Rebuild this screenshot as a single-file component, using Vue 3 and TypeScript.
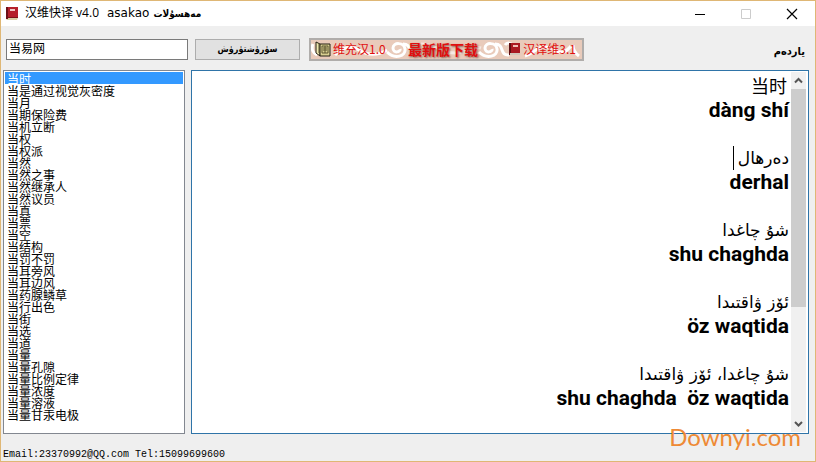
<script setup lang="ts">
import { ref } from 'vue'

interface Entry {
  text: string
  kind: 'han' | 'latin' | 'uyghur' | 'blank'
  caret?: boolean
}

const query = ref('当易网')
const selected = ref('当时')

const words: string[] = [
  '当时', '当是通过视觉灰密度', '当月', '当期保险费', '当机立断', '当权', '当权派', '当然',
  '当然之事', '当然继承人', '当然议员', '当真', '当票', '当空', '当结构', '当罚不罚',
  '当耳旁风', '当耳边风', '当药腺鳞草', '当行出色', '当街', '当选', '当道', '当量',
  '当量孔隙', '当量比例定律', '当量浓度', '当量溶液', '当量甘汞电极',
]

const entries: Entry[] = [
  { text: '当时', kind: 'han' },
  { text: 'dàng shí', kind: 'latin' },
  { text: '', kind: 'blank' },
  { text: 'دەرھال', kind: 'uyghur', caret: true },
  { text: 'derhal', kind: 'latin' },
  { text: '', kind: 'blank' },
  { text: 'شۇ چاغدا', kind: 'uyghur' },
  { text: 'shu chaghda', kind: 'latin' },
  { text: '', kind: 'blank' },
  { text: 'ئۆز ۋاقتىدا', kind: 'uyghur' },
  { text: 'öz waqtida', kind: 'latin' },
  { text: '', kind: 'blank' },
  { text: 'شۇ چاغدا، ئۆز ۋاقتىدا', kind: 'uyghur' },
  { text: 'shu chaghda  öz waqtida', kind: 'latin' },
]
</script>

<template>
  <div class="window">
    <header class="titlebar">
      <svg class="book" viewBox="0 0 14 15" aria-hidden="true">
        <path d="M1 1h12v11l-1 2H2l-1-1z" fill="#d8cfa4" />
        <path d="M2 1h11v11H2z" fill="#b5202a" />
        <path d="M1 1h2v12H1z" fill="#6b1016" />
        <path d="M3 11h10v1H3z" fill="#7d1218" />
        <path d="M5 3h5v2H5z" fill="#f0c8c4" />
      </svg>
      <h1 class="title">汉维快译 v4.0<span class="brand">asakao</span><bdi class="maker">مەھسۇلات</bdi></h1>
      <div class="controls">
        <button class="control" type="button" aria-label="Minimize">
          <svg viewBox="0 0 12 12"><path d="M1 6.500h10" stroke="#000" /></svg>
        </button>
        <button class="control" type="button" aria-label="Maximize" disabled>
          <svg viewBox="0 0 12 12"><path d="M1.500 1.500h9v9h-9z" fill="none" stroke="#ccc" /></svg>
        </button>
        <button class="control" type="button" aria-label="Close">
          <svg viewBox="0 0 12 12"><path d="M1 1l10 10M11 1L1 11" stroke="#000" stroke-width="1.200" /></svg>
        </button>
      </div>
    </header>

    <div class="toolbar">
      <input v-model="query" class="query" type="text" aria-label="查询" />
      <button class="search" type="button" lang="ug">سۈرۈشتۈرۈش</button>
      <div class="banner">
        <svg class="swirls" viewBox="0 0 271 19" preserveAspectRatio="none" aria-hidden="true">
          <g fill="none" stroke="#fff" stroke-width="3">
            <path d="M2 4c-2 5 0 9 4 11M24 15c8-8 16-10 24-5s18 6 28 0" />
            <path d="M76 12c8 8 19 4 18-3s-12-7-12-1 8 4 7 1M92 4c10 0 4 12 16 11" />
            <path d="M168 12c8 8 19 4 18-3s-12-7-12-1 8 4 7 1M184 4c10 0 4 12 14 11" />
            <path d="M110 4c16 0 20 10 36 9s16-8 24-5" opacity=".6" />
            <path d="M194 5c2-3 6-2 8 0M214 16c8-2 14-12 24-8s14 8 22-2M262 5c0 5 2 8 6 11" />
          </g>
        </svg>
        <a class="download" href="#v1">
          <svg class="pages" viewBox="0 0 16 16" aria-hidden="true">
            <path d="M1 1l4 2v12l-4-3z" fill="#eee8b0" stroke="#242014" />
            <path d="M5 3h10v12H5z" fill="#d9cf91" stroke="#242014" />
            <path d="M7 5h6v7H7zM8 7h4M8 9h4M10 5v7M4 2v10" fill="none" stroke="#5a5431" />
          </svg>维充汉1.0</a>
        <a class="newest" href="#latest">最新版下载</a>
        <a class="download" href="#v3">
          <svg class="mini" viewBox="0 0 13 14" aria-hidden="true">
            <path d="M1 1h11v12H1z" fill="#aa1922" />
            <path d="M1 1h2v12H1z" fill="#5e0d12" />
            <path d="M5 3h5v2H5z" fill="#efc0b8" />
            <path d="M2 11h10v2H2z" fill="#d1c7ba" />
          </svg>汉译维3.1</a>
      </div>
      <a class="help" href="#help" lang="ug">ياردەم</a>
    </div>

    <main class="panes">
      <select v-model="selected" class="words" :size="words.length" aria-label="词条">
        <option v-for="word in words" :key="word" :value="word" :class="{ current: word === selected }">{{ word }}</option>
      </select>
      <section class="result">
        <div class="entries" role="textbox" aria-multiline="true" aria-label="释义" contenteditable="true" spellcheck="false">
          <p v-for="(entry, i) in entries" :key="i" class="line" :class="entry.kind"><span v-if="entry.caret" class="caret"></span><bdi>{{ entry.text }}</bdi></p>
        </div>
        <div class="scrollbar" aria-hidden="true">
          <svg class="arrow" viewBox="0 0 15 17"><path d="M4 10.500l3.500-3.500 3.500 3.500" /></svg>
          <div class="track"><div class="thumb"></div></div>
          <svg class="arrow" viewBox="0 0 15 17"><path d="M4 7l3.500 3.500L11 7" /></svg>
        </div>
      </section>
    </main>

    <footer class="status">Email:23370992@QQ.com Tel:15099699600</footer>
    <div class="watermark">Downyi.com</div>
  </div>
</template>

<style>
body {
  margin: 0;
}
</style>

<style scoped>
* {
  box-sizing: border-box;
}

.window {
  position: relative;
  display: flex;
  flex-direction: column;
  min-height: 100vh;
  border: 1px solid #dfb775;
  background: #efefef;
  color: #000;
  font-family: "Liberation Sans", "Noto Sans CJK SC", "DejaVu Sans", sans-serif;
  font-size: 12px;
}

.titlebar {
  display: flex;
  align-items: center;
  height: 25px;
  padding-left: 4px;
  background: #fff;
}

.book {
  width: 14px;
  height: 15px;
  margin-right: 6px;
}

.title {
  flex: 1;
  margin: 0;
  font-family: "Open Sans", "Noto Sans CJK SC", "DejaVu Sans", sans-serif;
  font-size: 12px;
  font-weight: 400;
  line-height: 24px;
  white-space: nowrap;
}

.brand {
  margin: 0 4px 0 8px;
  font-family: "DejaVu Sans", sans-serif;
}

.maker {
  font-family: "DejaVu Sans Condensed", "DejaVu Sans", sans-serif;
  font-size: 10px;
  font-weight: 700;
}

.controls {
  display: flex;
}

.control {
  display: flex;
  align-items: center;
  justify-content: center;
  width: 46px;
  height: 24px;
  padding: 0;
  border: 0;
  background: none;
}

.control svg {
  width: 12px;
  height: 12px;
}

.toolbar {
  display: flex;
  align-items: center;
  height: 44px;
  padding: 2px 4px 0 5px;
}

.query {
  width: 182px;
  height: 21px;
  margin-right: 7px;
  padding: 0 2px 4px;
  border: 1px solid #7a7a7a;
  background: #fff;
  color: #000;
  font-family: "Noto Sans CJK SC", sans-serif;
  font-size: 12px;
  outline: 0;
}

.search {
  width: 105px;
  height: 21px;
  margin-right: 9px;
  padding: 0;
  border: 1px solid #adadad;
  background: #e1e1e1;
  color: #000;
  font-family: "DejaVu Sans Condensed", "DejaVu Sans", sans-serif;
  font-size: 9px;
  font-weight: 700;
  line-height: 18px;
}

.banner {
  position: relative;
  display: flex;
  align-items: center;
  justify-content: space-between;
  width: 275px;
  height: 23px;
  padding: 0 6px 0 4px;
  border: 2px solid #b0adab;
  background: #e9cbbb;
}

.swirls {
  position: absolute;
  inset: 0;
  width: 100%;
  height: 100%;
}

.download,
.newest {
  position: relative;
  display: flex;
  align-items: center;
  color: #e00f0f;
  font-family: "Noto Sans CJK SC", sans-serif;
  font-size: 12px;
  line-height: 18px;
  text-decoration: none;
}

.newest {
  margin-right: 8px;
  font-size: 14px;
  font-weight: 700;
  text-shadow: 1px 1px 2px #8a5a50;
}

.pages {
  width: 16px;
  height: 16px;
  margin-right: 2px;
}

.mini {
  width: 13px;
  height: 14px;
  margin-right: 2px;
}

.help {
  margin-left: auto;
  padding: 4px 6px 0 0;
  color: #000;
  font-family: "DejaVu Sans Condensed", "DejaVu Sans", sans-serif;
  font-size: 11px;
  font-weight: 700;
  text-decoration: none;
}

.panes {
  display: flex;
  flex: 1;
  gap: 6px;
  padding: 0 6px 0 2px;
}

.words {
  width: 182px;
  padding: 1px;
  border: 1px solid #828790;
  border-radius: 0;
  background: #fff;
  color: #000;
  font-family: "Noto Sans CJK SC", sans-serif;
  font-size: 12px;
  outline: 0;
  overflow: hidden;
}

.words option {
  display: flex;
  align-items: center;
  height: 12px;
  min-height: 12px;
  padding: 0 2px;
  overflow: visible;
}

.words .current {
  background: #3399ff linear-gradient(#3399ff, #3399ff);
  color: #fff;
  -webkit-text-fill-color: #fff;
}

.result {
  display: flex;
  flex: 1;
  border: 1px solid #2f74a8;
  background: #fff;
}

.entries {
  flex: 1;
  padding: 3px 2px 0 0;
  text-align: right;
  outline: 0;
}

.line {
  height: 24px;
  margin: 0;
  line-height: 24px;
  white-space: pre;
}

.han {
  padding-right: 2px;
  font-family: "Noto Sans CJK SC", sans-serif;
  font-size: 18px;
  line-height: 22px;
}

.latin {
  font-family: Roboto, "Liberation Sans", sans-serif;
  font-size: 21px;
  font-weight: 700;
}

.uyghur {
  font-family: "DejaVu Sans", sans-serif;
  font-size: 17px;
}

.caret {
  display: inline-block;
  width: 1px;
  height: 24px;
  margin-right: 4px;
  background: #000;
  vertical-align: top;
}

.scrollbar {
  display: flex;
  flex-direction: column;
  width: 15px;
  margin: 1px 2px 1px 0;
  background: #f0f0f0;
}

.arrow {
  width: 15px;
  height: 17px;
  fill: none;
  stroke: #555;
  stroke-width: 2;
}

.track {
  flex: 1;
}

.thumb {
  height: 67%;
  background: #cdcdcd;
}

.status {
  height: 27px;
  padding: 14px 2px 0;
  font-family: "Liberation Mono", monospace;
  font-size: 10px;
  line-height: 14px;
}

.watermark {
  position: absolute;
  right: 14px;
  bottom: 9px;
  color: #ee8a35;
  font-family: Lato, sans-serif;
  font-size: 24px;
  line-height: 30px;
}
</style>
